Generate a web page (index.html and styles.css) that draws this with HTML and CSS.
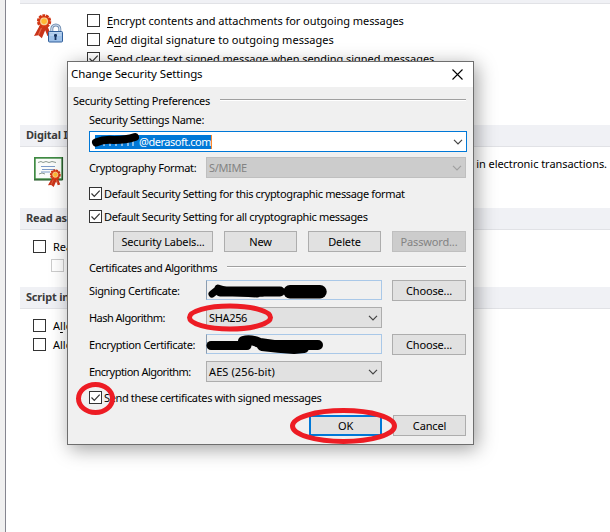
FILE: index.html
```html
<!DOCTYPE html>
<html lang="en">
<head>
<meta charset="utf-8">
<title>Change Security Settings</title>
<link rel="stylesheet" href="styles.css">
</head>
<body>
<svg class="defs" aria-hidden="true">
  <symbol id="tick" viewBox="0 0 13 13"><path d="M2.5 6.5l2.8 2.8 5.4-5.6" fill="none" stroke="#333" stroke-width="1.2"/></symbol>
  <symbol id="chev" viewBox="0 0 10 6"><path d="M1 .8l4 4 4-4" fill="none" stroke="currentColor" stroke-width="1.2"/></symbol>
  <symbol id="rosette" viewBox="0 0 16 22">
    <path d="M5 11L0 20l4-.5L7 22l3-7 2 5 3-1-3-8z" fill="#c9341a"/>
    <path d="M7 12l-3 7M10 12l2 6" stroke="#e86a48" stroke-width="1"/>
    <circle cx="9" cy="7" r="5.4" fill="#e84a1c" stroke="#cf3412" stroke-width="2.4" stroke-dasharray="2.4 .8"/>
    <circle cx="9" cy="7" r="3.1" fill="#ffb733" stroke="#f4d6a0"/>
  </symbol>
</svg>
<div class="page">
  <div class="head head-cut"></div>
  <section class="mail">
    <svg class="icon" viewBox="0 0 30 30">
      <g transform="translate(0 -.5) scale(1.120)">
        <path d="M5 11L0 20l4-.5L7 22l3-7 2 5 3-1-3-8z" fill="#c9341a"/>
        <path d="M7 12l-3 7" stroke="#e86a48"/>
        <circle cx="9" cy="7" r="5.200" fill="#e84a1c" stroke="#cf3412" stroke-width="2.400" stroke-dasharray="2.400 .8"/>
        <circle cx="9" cy="7" r="3" fill="#ffb733" stroke="#f4d6a0"/>
      </g>
      <path d="M17.800 18v-3a4 4 0 0 1 8 0v3" fill="none" stroke="#6f8db2" stroke-width="3"/>
      <path d="M17.800 18v-3a4 4 0 0 1 8 0v3" fill="none" stroke="#d5e1ef" stroke-width="1.200"/>
      <rect x="14.500" y="17.500" width="14" height="10.500" rx="1" fill="#9dc0e8" stroke="#315f9b"/>
      <path d="M15.500 18.800h12M15.500 21h12" stroke="#c9def3"/>
      <path d="M21.500 20v6M20 21.500h3" stroke="#17345f" stroke-width="1.800"/>
    </svg>
    <div class="opts">
      <div class="opt"><i class="box"></i><span class="o1"><u>E</u>ncrypt contents and attachments for outgoing messages</span></div>
      <div class="opt"><i class="box"></i><span class="o2">A<u>d</u>d digital signature to outgoing messages</span></div>
      <div class="opt"><i class="box"><svg><use href="#tick"/></svg></i><span class="o3">Send clear <u>t</u>ext signed message when sending signed messages</span></div>
    </div>
  </section>
  <div class="head">Digital ID</div>
  <section class="ids">
    <svg class="icon" viewBox="0 0 30 30">
      <rect x=".8" y=".8" width="27.400" height="21.400" fill="#fafcfa" stroke="#3f8a43" stroke-width="1.800"/>
      <path d="M28.500 0v23H0" fill="none" stroke="#2c5a30"/>
      <path d="M4 5.500l3-1 2 1 3-1 3 1 3-1 4 1M5 17l3-1 3 1" fill="none" stroke="#8c9a90"/>
      <path d="M7 9.500h14M8 12.500h13M7 15h9" stroke="#7d9bc9"/>
      <use href="#rosette" x="12.500" y="12" width="16" height="18"/>
    </svg>
    <span>in electronic transactions.</span>
  </section>
  <div class="head">Read as</div>
  <section class="read">
    <div class="opt"><i class="box"></i><span>Rea</span></div>
    <div class="opt sub"><i class="box dim"></i></div>
  </section>
  <div class="head">Script in</div>
  <section class="script">
    <div class="opt"><i class="box"></i><span>A<u>l</u>lo</span></div>
    <div class="opt"><i class="box"></i><span>Allo</span></div>
  </section>
</div>

<div class="dialog">
  <div class="title"><span>Change Security Settings</span><svg class="close" viewBox="0 0 11 11"><path d="M.5.5l10 10M10.500.5l-10 10" stroke="#000" stroke-width="1.100"/></svg></div>
  <div class="body">
    <div class="group first"><span>Security Setting Preferences</span><hr></div>
    <div class="label name">Security Settings Name:</div>
    <div class="combo edit"><span class="sel">@derasoft.com</span><svg class="chev"><use href="#chev"/></svg></div>
    <div class="row format"><span class="label">Cryptography Format:</span><div class="combo off"><span>S/MIME</span><svg class="chev"><use href="#chev"/></svg></div></div>
    <div class="check c1"><i class="box"><svg><use href="#tick"/></svg></i><span>Default Security Setting for this cryptographic message format</span></div>
    <div class="check c2"><i class="box"><svg><use href="#tick"/></svg></i><span>Default Security Setting for all cryptographic messages</span></div>
    <div class="buttons"><button class="btn wide">Security Labels...</button><button class="btn">New</button><button class="btn">Delete</button><button class="btn off last">Password...</button></div>
    <div class="group second"><span>Certificates and Algorithms</span><hr></div>
    <div class="row sign"><span class="label">Signing Certificate:</span><div class="field"></div><button class="btn last">Choose...</button></div>
    <div class="row"><span class="label tight">Hash Algorithm:</span><div class="combo mid"><span>SHA256</span><svg class="chev"><use href="#chev"/></svg></div></div>
    <div class="row"><span class="label">Encryption Certificate:</span><div class="field"></div><button class="btn last">Choose...</button></div>
    <div class="row"><span class="label tight">Encryption Algorithm:</span><div class="combo mid"><span class="aes">AES (256-bit)</span><svg class="chev"><use href="#chev"/></svg></div></div>
    <div class="check c3"><i class="box"><svg><use href="#tick"/></svg></i><span>Send these certificates with signed messages</span></div>
    <div class="actions"><button class="btn ok">OK</button><button class="btn">Cancel</button></div>
  </div>
</div>

<svg class="marks" viewBox="0 0 610 532" fill="none">
  <path d="M104 146v-4M110 146v-5M116 146v-6M122 146v-6M128 146v-5M133 146v-5" stroke="#fff"/>
  <g stroke="#000" stroke-linecap="round" stroke-linejoin="round">
    <path d="M96 142.500q8-3.500 18-2.500 12 0 21-3" stroke-width="8"/>
    <path d="M212 294l5-4 8 2 32 2M218 288l10 3 34 2" stroke-width="7"/>
    <path d="M220 291.500h60" stroke-width="10"/>
    <path d="M290 291.800h30" stroke-width="13.500"/>
    <path d="M211 345.500h36" stroke-width="9"/>
    <path d="M243 341q8-2 17 2l14 2h44" stroke-width="10"/>
    <path d="M262 346q16 2 32 3l10-1" stroke-width="10"/>
  </g>
  <g stroke="#ed1c24" stroke-width="5">
    <ellipse cx="230" cy="317.500" rx="40.500" ry="11.500"/>
    <ellipse cx="95.500" cy="398.500" rx="17" ry="14"/>
    <ellipse cx="343.500" cy="426" rx="51" ry="15.500"/>
  </g>
</svg>
</body>
</html>
```
FILE: styles.css
```css
* { box-sizing: border-box; }
body {
  margin: 0; width: 610px; height: 532px; overflow: hidden;
  position: relative; background: #f0f0f0; color: #000;
  font: 11px/14px "Noto Sans", sans-serif; white-space: nowrap;
}
.defs { position: absolute; width: 0; height: 0; }

.page { height: 532px; margin-left: 5px; padding-left: 14px; border-left: 1px solid #85858f; background: #fff; }
.head {
  height: 22px; padding: 0 6px; line-height: 20px;
  background: #f0f1f5; border-bottom: 1px solid #e1e2e6;
  color: #3b3b3b; font-weight: bold; letter-spacing: -.2px;
}
.head-cut { height: 4px; }
.mail { display: flex; height: 121px; padding: 10px 0 0 14px; }
.icon { width: 30px; height: 30px; flex: none; }
.opts { margin-left: 23px; }
.opt { display: flex; height: 19px; gap: 7px; line-height: 14px; }
.o1 { letter-spacing: -.05px; }
.o2 { letter-spacing: .03px; }
.o3 { letter-spacing: -.05px; }
u { text-underline-offset: 2px; text-decoration-skip-ink: none; }
.box { display: block; width: 13px; height: 13px; flex: none; border: 1px solid #333; background: #fff; }
.box svg { display: block; width: 13px; height: 13px; margin: -1px; }
.box.dim { border-color: #ccc; }
.ids { display: flex; justify-content: space-between; height: 61px; padding: 10px 3px 0 14px; letter-spacing: -.05px; }
.read, .script { padding: 10px 0 0 13px; }
.read { height: 57px; }
.sub { padding-left: 18px; }

.dialog {
  position: absolute; left: 67px; top: 61px; width: 407px; height: 384px;
  border: 1px solid #6e6e6e; background: #f0f0f0;
  box-shadow: 3px 4px 18px rgba(0,0,0,.38); letter-spacing: -.34px;
}
.title {
  display: flex; align-items: center; justify-content: space-between;
  height: 25px; padding: 0 10px 1px 3px; background: #fff;
  font-size: 11.500px; letter-spacing: -.12px;
}
.close { width: 11px; height: 11px; }
.body { padding: 7px 7px 0 21px; }
.group { display: flex; height: 14px; gap: 10px; }
.group hr { flex: 1; height: 2px; margin: 5px 0 0; border: 0; border-top: 1px solid #a0a0a0; background: #fff; }
.first { margin-left: -16px; letter-spacing: -.28px; }
.second { margin-top: 9px; letter-spacing: -.46px; }
.name { margin-top: 5px; }
.combo {
  display: flex; align-items: center; justify-content: space-between;
  height: 21px; padding: 0 3px 0 2px; border: 1px solid #adadad; background: #e1e1e1; color: #000;
}
.chev { width: 10px; height: 6px; color: #444; flex: none; }
.edit { width: 378px; margin-top: 4px; padding-left: 5px; border-color: #0078d7; background: #fff; }
.sel { height: 14px; padding-left: 44px; background: #0078d7; color: #fff; letter-spacing: -.47px; border-right: 1px solid #ff8728; }
.row { display: flex; align-items: center; height: 21px; margin-top: 6px; }
.row .label { width: 117px; flex: none; }
.tight { letter-spacing: -.53px; }
.format { margin-top: 5px; }
.format .combo { width: 261px; }
.combo.off { background: #ccc; border-color: #bfbfbf; color: #838383; }
.off .chev { color: #a0a0a0; }
.mid { width: 176px; }
.aes { letter-spacing: .1px; }
.field { width: 176px; height: 20px; border: 1px solid #a9c8e8; border-left-color: #8a9cb0; align-self: flex-start; }
.check { display: flex; align-items: center; gap: 2px; height: 13px; letter-spacing: -.36px; }
.c1 { margin-top: 9px; }
.c2 { margin-top: 10px; letter-spacing: -.35px; }
.c3 { margin-top: 9px; }
.btn {
  width: 73px; height: 21px; padding: 0; border: 1px solid #adadad; background: #e1e1e1;
  color: #000; font: inherit; letter-spacing: -.16px; line-height: 19px; text-align: center;
}
.btn.last { width: 74px; margin-left: auto; }
.btn.off { background: #ccc; border-color: #bfbfbf; color: #838383; }
.btn.wide { width: 100px; }
.buttons { display: flex; gap: 11px; margin-top: 8px; padding-left: 24px; }
.sign { margin-top: 5px; }
.actions { display: flex; justify-content: flex-end; gap: 11px; margin-top: 11px; }
.ok { border: 2px solid #0078d7; line-height: 17px; }

.marks { position: absolute; left: 0; top: 0; width: 610px; height: 532px; pointer-events: none; }
```
